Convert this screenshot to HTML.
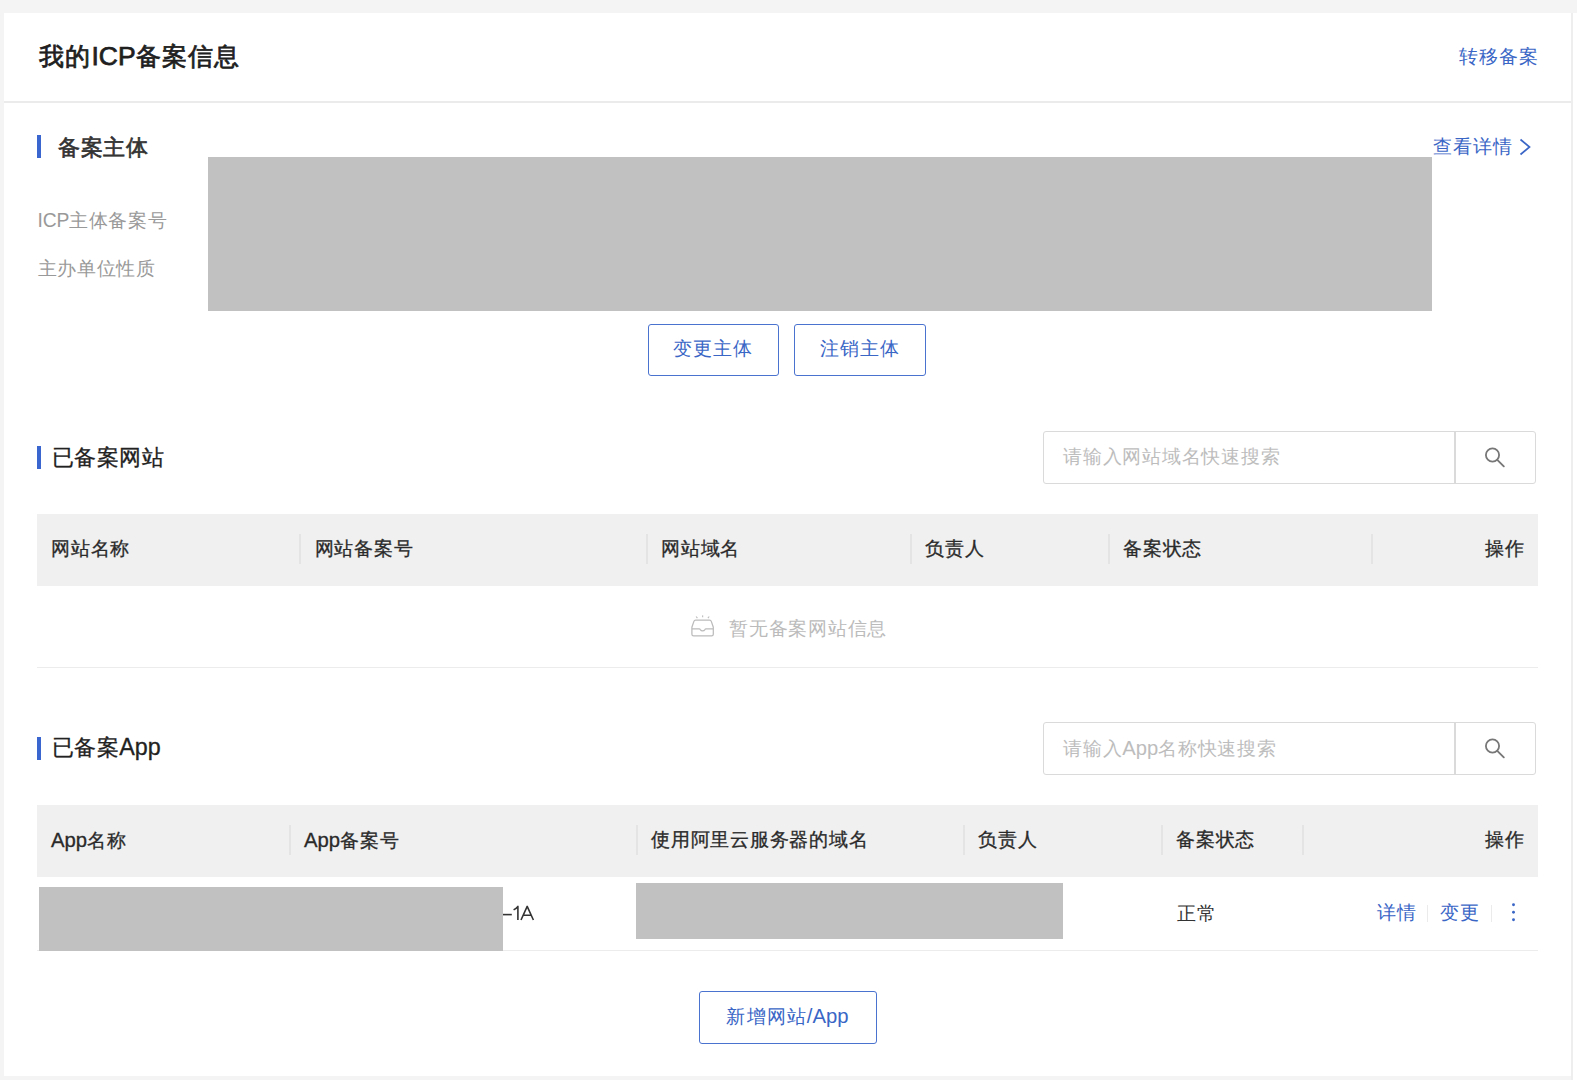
<!DOCTYPE html>
<html><head><meta charset="utf-8">
<style>
*{margin:0;padding:0;box-sizing:border-box}
html,body{width:1577px;height:1080px;overflow:hidden;background:#f4f4f4;font-family:"Liberation Sans",sans-serif;}
.abs{position:absolute;white-space:nowrap}
.card{position:absolute;left:4px;top:13px;width:1567px;height:1063px;background:#fff}
.rstrip{position:absolute;left:1573px;top:13px;width:4px;height:1067px;background:#fff}
.rline{position:absolute;left:1571px;top:13px;width:2px;height:1067px;background:#eeeeee}
.title{left:39px;top:38px;font-size:25px;letter-spacing:1.2px;font-weight:normal;-webkit-text-stroke:0.75px #1f1f1f;color:#1f1f1f;line-height:36px}
.title .l{font-size:26.5px;letter-spacing:0}
.link{color:#3a66c6;font-size:18.8px;letter-spacing:0.9px;line-height:26px}
.divider{position:absolute;left:4px;top:100.7px;width:1567px;height:2px;background:#ebebeb}
.bar{position:absolute;width:3.5px;background:#3a66d0}
.h2{font-size:22px;letter-spacing:0.6px;color:#222;line-height:30px;-webkit-text-stroke:0.3px #222}
.h2 .l{font-size:23.3px;letter-spacing:0}
.label{font-size:19px;letter-spacing:0.7px;color:#999;line-height:26px}
.label .l{font-size:19.3px;letter-spacing:-0.2px}
.redact{position:absolute;background:#c1c1c1}
.btn{position:absolute;border:1.8px solid #4a72cf;border-radius:3px;color:#3a66c6;font-size:18.8px;letter-spacing:0.9px;text-align:center;background:#fff}
.btn .l{font-size:20.3px;letter-spacing:0}
.search{position:absolute;left:1043px;width:493px;height:53px;border:1.7px solid #dadada;border-radius:3px;background:#fff}
.search .ph{position:absolute;left:19px;top:12.3px;font-size:19px;letter-spacing:0.75px;color:#bdbdbd;line-height:26px;white-space:nowrap}
.search .ph .l{font-size:20.2px;letter-spacing:0}
.search .sep{position:absolute;left:410px;top:0;width:1.7px;height:100%;background:#dadada}
.search svg{position:absolute;left:435px;top:10px}
.thead{position:absolute;left:37px;width:1501px;height:72px;background:#f0f0f0}
.th{position:absolute;top:22px;font-size:19px;letter-spacing:0.75px;-webkit-text-stroke:0.3px #2a2a2a;color:#2a2a2a;line-height:26px;white-space:nowrap}
.th .l{font-size:20.3px;letter-spacing:0;font-weight:normal}
.tsep{position:absolute;top:20px;width:1.5px;height:30px;background:#e4e4e4}
.hline{position:absolute;height:1.6px;background:#ececec}
.td{font-size:19px;letter-spacing:0.75px;color:#333;line-height:26px}
.asep{position:absolute;width:1.2px;height:17px;background:#ebebeb}
.dot{position:absolute;width:2.6px;height:2.6px;border-radius:50%;background:#3a66c6}
</style></head><body>
<div class="card"></div>
<div class="rline"></div>
<div class="rstrip"></div>
<div class="abs title">我的<span class="l">ICP</span>备案信息</div>
<div class="abs link" style="left:1459px;top:43.5px">转移备案</div>
<div class="divider"></div>

<div class="bar" style="left:37px;top:135px;height:23px"></div>
<div class="abs h2" style="left:58px;top:133px;font-weight:normal;color:#333;-webkit-text-stroke:0.65px #333">备案主体</div>
<div class="abs link" style="left:1433px;top:134px">查看详情</div>
<svg class="abs" style="left:1518px;top:136.7px" width="15" height="20" viewBox="0 0 15 20"><path d="M2.5 2.5 L11.5 10 L2.5 17.5" fill="none" stroke="#3a66c6" stroke-width="1.7"/></svg>
<div class="abs label" style="left:37.5px;top:208px"><span class="l">ICP</span>主体备案号</div>
<div class="abs label" style="left:37.5px;top:256px">主办单位性质</div>
<div class="redact" style="left:208px;top:157px;width:1224px;height:154px"></div>
<div class="btn" style="left:647.5px;top:323.5px;width:131.5px;height:52.5px;line-height:48.5px">变更主体</div>
<div class="btn" style="left:794px;top:323.5px;width:131.5px;height:52.5px;line-height:48.5px">注销主体</div>

<div class="bar" style="left:37px;top:446px;height:23px"></div>
<div class="abs h2" style="left:51.5px;top:443px">已备案网站</div>
<div class="search" style="top:431px"><div class="ph">请输入网站域名快速搜索</div><div class="sep"></div>
<svg width="30" height="30" viewBox="0 0 30 30"><circle cx="13.5" cy="13" r="6.6" fill="none" stroke="#777" stroke-width="1.8"/><path d="M18.3 17.8 L24.8 24.3" stroke="#777" stroke-width="1.9" stroke-linecap="round"/></svg></div>
<div class="thead" style="top:514px">
  <div class="th" style="left:14px">网站名称</div>
  <div class="tsep" style="left:262px"></div>
  <div class="th" style="left:277.5px">网站备案号</div>
  <div class="tsep" style="left:609px"></div>
  <div class="th" style="left:624px">网站域名</div>
  <div class="tsep" style="left:873px"></div>
  <div class="th" style="left:888px">负责人</div>
  <div class="tsep" style="left:1071px"></div>
  <div class="th" style="left:1086px">备案状态</div>
  <div class="tsep" style="left:1334px"></div>
  <div class="th" style="right:13.5px">操作</div>
</div>
<svg class="abs" style="left:688px;top:612px" width="30" height="28" viewBox="0 0 30 28"><path d="M7.6 8.2 L21.6 8.2 Q22.9 8.2 23.3 9.4 L25.3 15.2 L25.3 22.2 Q25.3 23.9 23.6 23.9 L5.6 23.9 Q3.9 23.9 3.9 22.2 L3.9 15.2 L5.9 9.4 Q6.3 8.2 7.6 8.2 Z" fill="none" stroke="#bbb" stroke-width="1.25"/><path d="M3.9 16.75 L11.2 16.75 Q11.9 16.75 12.3 17.6 Q13.1 18.9 14.6 18.9 Q16.1 18.9 16.9 17.6 Q17.3 16.75 18 16.75 L25.3 16.75" fill="none" stroke="#bbb" stroke-width="1.25"/><path d="M8.1 4.5 L9.4 6.1 M14.6 3.4 L14.7 5.3 M21.2 4.5 L19.9 6.1" stroke="#bbb" stroke-width="1.1"/></svg>
<div class="abs" style="left:729px;top:616px;font-size:19px;letter-spacing:0.75px;color:#bbb;line-height:26px">暂无备案网站信息</div>
<div class="hline" style="left:37px;top:666.5px;width:1501px"></div>

<div class="bar" style="left:37px;top:736.5px;height:23px"></div>
<div class="abs h2" style="left:51.5px;top:732.3px">已备案<span class="l">App</span></div>
<div class="search" style="top:722px"><div class="ph">请输入<span class="l">App</span>名称快速搜索</div><div class="sep"></div>
<svg width="30" height="30" viewBox="0 0 30 30"><circle cx="13.5" cy="13" r="6.6" fill="none" stroke="#777" stroke-width="1.8"/><path d="M18.3 17.8 L24.8 24.3" stroke="#777" stroke-width="1.9" stroke-linecap="round"/></svg></div>
<div class="thead" style="top:805px">
  <div class="th" style="left:14px"><span class="l">App</span>名称</div>
  <div class="tsep" style="left:252px"></div>
  <div class="th" style="left:267px"><span class="l">App</span>备案号</div>
  <div class="tsep" style="left:599px"></div>
  <div class="th" style="left:614px">使用阿里云服务器的域名</div>
  <div class="tsep" style="left:926px"></div>
  <div class="th" style="left:941px">负责人</div>
  <div class="tsep" style="left:1124px"></div>
  <div class="th" style="left:1139px">备案状态</div>
  <div class="tsep" style="left:1265px"></div>
  <div class="th" style="right:13.5px">操作</div>
</div>

<svg class="abs" style="left:500px;top:900px" width="40" height="26" viewBox="0 0 40 26"><g fill="none" stroke="#333" stroke-width="1.6" stroke-linejoin="round"><path d="M2.7 14.6 L11.8 14.6"/><path d="M13.6 9.9 Q16.4 8.3 17.9 6.4 L17.9 20"/><path d="M21 20 L27.2 6.4 L33.4 20 M23.3 15.2 L31.1 15.2"/></g></svg>
<div class="redact" style="left:636px;top:883px;width:427px;height:56px"></div>
<div class="abs td" style="left:1177px;top:900.5px">正常</div>
<div class="abs link" style="left:1377px;top:900px">详情</div>
<div class="asep" style="left:1426.5px;top:904.5px"></div>
<div class="abs link" style="left:1440px;top:900px">变更</div>
<div class="asep" style="left:1491px;top:904.5px"></div>
<svg class="abs" style="left:1508px;top:900px" width="12" height="24" viewBox="0 0 12 24"><circle cx="5.5" cy="4.8" r="1.45" fill="#3a66c6"/><circle cx="5.5" cy="12.3" r="1.45" fill="#3a66c6"/><circle cx="5.5" cy="19.7" r="1.45" fill="#3a66c6"/></svg>
<div class="hline" style="left:37px;top:949.5px;width:1501px"></div>
<div class="redact" style="left:39px;top:887px;width:464px;height:64px"></div>

<div class="btn" style="left:698.5px;top:991px;width:178px;height:52.5px;line-height:48.5px;letter-spacing:1.1px">新增网站<span class="l">/App</span></div>
</body></html>
